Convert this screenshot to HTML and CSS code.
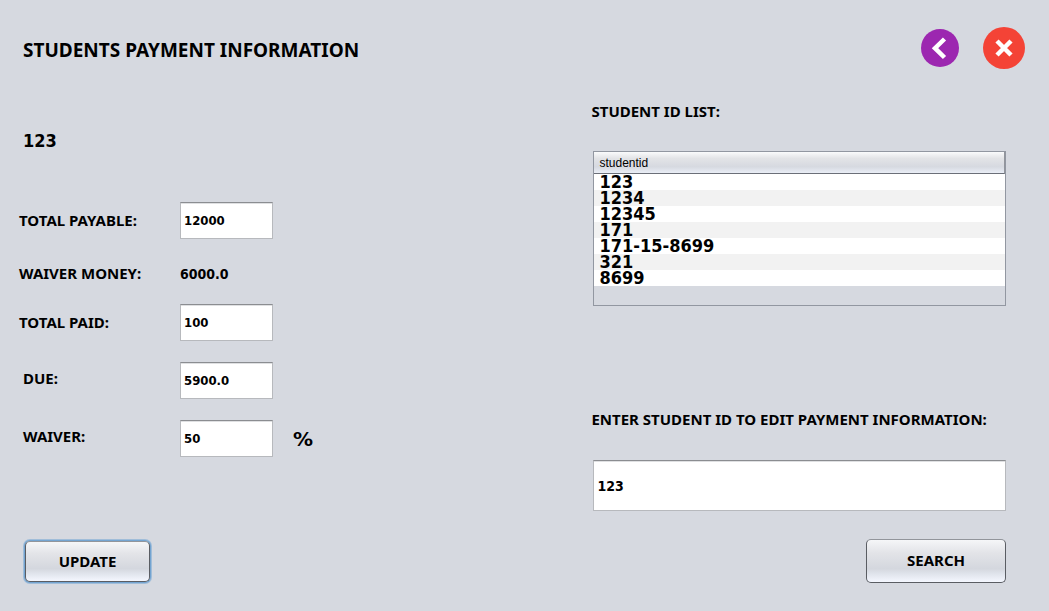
FILE: index.html
```html
<!DOCTYPE html>
<html lang="en">
<head>
<meta charset="utf-8">
<title>Students Payment Information</title>
<link rel="stylesheet" href="styles.css">
</head>
<body>
<header class="header">
  <h1 class="title">STUDENTS PAYMENT INFORMATION</h1>
  <div class="actions">
    <button class="icon-button" type="button" aria-label="Back">
      <svg width="38" height="38" viewBox="0 0 38 38"><circle cx="19" cy="19" r="19" fill="#9c27b0"/><path d="M23.500 10 14 19.200l9.500 9.300" fill="none" stroke="#fff" stroke-width="4.500"/></svg>
    </button>
    <button class="icon-button" type="button" aria-label="Close">
      <svg width="42" height="42" viewBox="0 0 42 42"><circle cx="21" cy="21" r="21" fill="#f44336"/><path d="M14 14 28 28M28 14 14 28" fill="none" stroke="#fff" stroke-width="4.500"/></svg>
    </button>
  </div>
</header>
<main class="content">
  <form class="payment">
    <output class="student">123</output>
    <div class="fields">
      <div class="row">
        <label class="label" for="payable">TOTAL PAYABLE:</label>
        <input class="field amount" id="payable" type="text" value="12000">
      </div>
      <div class="row row-static">
        <label class="label" for="money">WAIVER MONEY:</label>
        <output class="value" id="money">6000.0</output>
      </div>
      <div class="row">
        <label class="label" for="paid">TOTAL PAID:</label>
        <input class="field amount" id="paid" type="text" value="100">
      </div>
      <div class="row">
        <label class="label label-inset" for="due">DUE:</label>
        <input class="field amount" id="due" type="text" value="5900.0">
      </div>
      <div class="row">
        <label class="label label-inset" for="waiver">WAIVER:</label>
        <input class="field amount" id="waiver" type="text" value="50">
        <span class="percent">%</span>
      </div>
    </div>
    <button class="button update" type="button">UPDATE</button>
  </form>
  <section class="lookup">
    <h2 class="label">STUDENT ID LIST:</h2>
    <div class="list">
      <table class="table">
        <thead><tr><th>studentid</th></tr></thead>
        <tbody>
          <tr><td>123</td></tr>
          <tr><td>1234</td></tr>
          <tr><td>12345</td></tr>
          <tr><td>171</td></tr>
          <tr><td>171-15-8699</td></tr>
          <tr><td>321</td></tr>
          <tr><td>8699</td></tr>
        </tbody>
      </table>
    </div>
    <form class="search-form">
      <label class="label" for="search">ENTER STUDENT ID TO EDIT PAYMENT INFORMATION:</label>
      <input class="field search-field" id="search" type="text" value="123">
      <button class="button search" type="button">SEARCH</button>
    </form>
  </section>
</main>
</body>
</html>
```
FILE: styles.css
```css
* { box-sizing: border-box; }
body {
  margin: 0;
  background: #d6d9e0;
  color: #000;
  font: bold 14px/18px "DejaVu Sans Condensed", Tahoma, sans-serif;
}
.header {
  display: flex;
  align-items: center;
  justify-content: space-between;
  padding: 27px 24px 27px 23px;
}
.title {
  margin: 0;
  padding-top: 4px;
  font: bold 19px/24px "Noto Sans", Tahoma, sans-serif;
}
.actions { display: flex; align-items: center; gap: 24px; }
.icon-button { display: flex; padding: 0; border: 0; background: none; }
.content {
  display: flex;
  justify-content: space-between;
  padding: 0 43px 28px 19px;
}
.student {
  display: block;
  padding: 33px 0 49px 4px;
  font-size: 18px;
  line-height: 24px;
}
.fields { display: flex; flex-direction: column; gap: 21px; }
.row { display: flex; align-items: center; }
.row-static { padding-top: 5px; }
.label {
  margin: 0;
  font: bold 15px/18px "Noto Sans", Tahoma, sans-serif;
}
.row .label { width: 161px; padding-bottom: 2px; line-height: 16px; }
.row .label-inset { padding: 0 0 6px 4px; }
.field {
  padding: 0 3px;
  border: 1px solid #b7b9bd;
  border-top-color: #8b8d91;
  border-radius: 0;
  background: #fff;
  box-shadow: inset 0 1px 0 #dfe0e2;
  color: #000;
  font: inherit;
}
.amount { width: 93px; height: 37px; font-size: 13px; }
.percent {
  padding-left: 20px;
  font: bold 20px/24px "DejaVu Sans", Verdana, sans-serif;
}
.button {
  padding: 0 0 2px;
  border: 1px solid #5a5d63;
  border-top-color: #92959b;
  border-radius: 5px;
  background: linear-gradient(#f5f6f8, #e3e4e8 30%, #d4d7de 68%, #dfe3eb 80%, #f4f7ff);
  color: #000;
  font: bold 15px/18px "Noto Sans", Tahoma, sans-serif;
}
.update {
  width: 125px;
  height: 41px;
  margin: 84px 0 0 6px;
  box-shadow: 0 0 0 1px #73a4d1, 0 0 0 2px #a0bdd9;
}
.lookup { width: 42%; padding-top: 6px; }
.list {
  height: 155px;
  margin: 31px 0 104px 2px;
  overflow: hidden;
  border: 1px solid #9297a1;
}
.table { width: 100%; border-spacing: 0; }
.table th {
  height: 22px;
  padding: 0 5px;
  border-right: 1px solid #92959c;
  border-bottom: 1px solid #6b6f78;
  background: linear-gradient(#fafbfc, #e3e4e7 30%, #d6d9e0 70%, #eaeef6);
  font: 12px/20px "Liberation Sans", Arial, sans-serif;
  text-align: left;
}
.table td {
  height: 16px;
  padding: 0 5px;
  background: #fff;
  font-size: 18px;
  line-height: 16px;
}
.table tr:nth-child(even) td { background: #f2f2f2; }
.search-form { display: flex; flex-direction: column; }
.search-field { height: 51px; margin: 32px 0 28px 2px; }
.search { align-self: flex-end; width: 140px; height: 44px; }
```
